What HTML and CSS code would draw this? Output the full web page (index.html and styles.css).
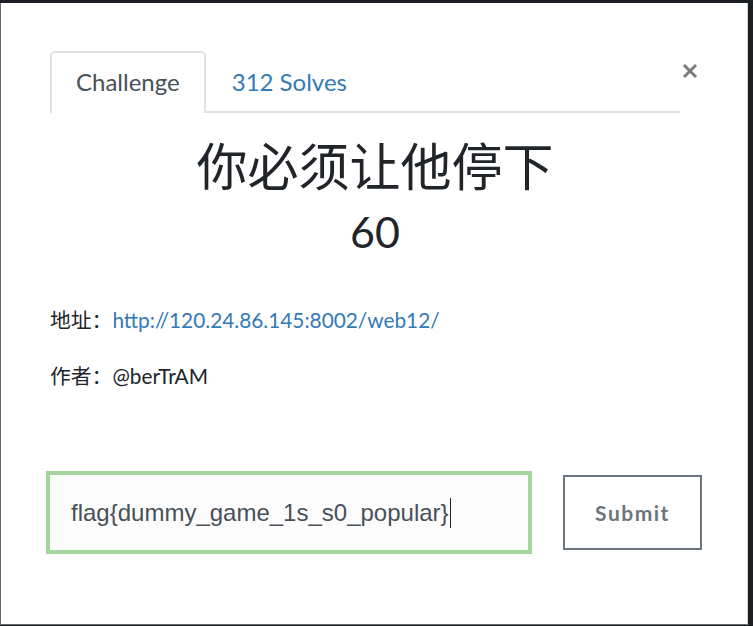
FILE: index.html
```html
<!DOCTYPE html>
<html lang="zh">
<head>
    <meta charset="UTF-8">
    <meta name="viewport" content="width=device-width, initial-scale=1.0">
    <title>你必须让他停下</title>
    <link rel="stylesheet" href="styles.css">
</head>
<body>
    <div class="modal">
        <button class="close" aria-label="Close">
            <svg width="16" height="16" viewBox="0 0 16 16">
                <path d="M2 2 L14 14 M14 2 L2 14" stroke="#7b7b7b" stroke-width="3" stroke-linecap="butt"/>
            </svg>
        </button>

        <ul class="tabs">
            <li class="tab active">Challenge</li>
            <li class="tab"><a href="#">312 Solves</a></li>
        </ul>

        <h2 class="challenge-name">你必须让他停下</h2>
        <h3 class="challenge-value">60</h3>

        <div class="challenge-desc">
            <p>地址：<a href="#">http://120.24.86.145:8002/web12/</a></p>
            <p>作者：@berTrAM</p>
        </div>

        <div class="submit-row">
            <div class="flag-box">
                <span class="flag-text">flag{dummy_game_1s_s0_popular}</span><span class="caret"></span>
            </div>
            <button class="submit-btn">Submit</button>
        </div>
    </div>
</body>
</html>
```

FILE: styles.css
```css
body {
    margin: 0;
    background-color: #1b1e22;
    font-family: Lato, "Noto Sans CJK SC", sans-serif;
    color: #212529;
    overflow: hidden;
}
.modal {
    position: relative;
    box-sizing: border-box;
    width: 748px;
    height: 622px;
    margin: 3px 0 0 0;
    background-color: #fff;
    border-left: 1px solid #666;
    border-right: 1px solid #cfcfcf;
    border-bottom: 1px solid #666;
    padding: 48px 47px 0 49px;
}
.close {
    position: absolute;
    top: 60px;
    left: 681px;
    border: none;
    background: none;
    padding: 0;
}
.close svg {
    display: block;
}
.tabs {
    list-style: none;
    margin: 0;
    padding: 0;
    display: flex;
    border-bottom: 2px solid #dee2e6;
    width: 630px;
}
.tab {
    font-size: 24px;
    line-height: 58px;
    height: 58px;
    padding: 0 24px;
    margin-bottom: -2px;
    border: 2px solid transparent;
    border-bottom: none;
    border-radius: 5px 5px 0 0;
}
.tab.active {
    color: #495057;
    border-color: #dee2e6;
    background-color: #fff;
    height: 60px;
}
.tab a {
    color: #337ab7;
    text-decoration: none;
}
.challenge-name {
    text-align: center;
    font-weight: normal;
    font-size: 51px;
    line-height: 60px;
    margin: 24px 0 0 0;
}
.challenge-value {
    text-align: center;
    font-weight: normal;
    font-size: 43px;
    line-height: 50px;
    margin: 10px 0 0 0;
}
.challenge-desc {
    margin-top: 50px;
    font-size: 20.8px;
    color: #212529;
}
.challenge-desc p {
    margin: 0 0 31px 0;
    line-height: 25px;
}
.challenge-desc a {
    color: #337ab7;
    text-decoration: none;
}
.submit-row {
    display: flex;
    align-items: center;
    gap: 31px;
    margin-top: 83px;
    margin-left: -4px;
}
.flag-box {
    flex: none;
    box-sizing: border-box;
    width: 486px;
    height: 83px;
    border: 4px solid #a6d49e;
    background-color: #fcfcfc;
    display: flex;
    align-items: center;
    padding-left: 21px;
    font-family: "Liberation Sans", Arial, sans-serif;
    font-size: 24px;
    color: #495057;
}
.caret {
    display: inline-block;
    width: 1px;
    height: 30px;
    background-color: #222;
    margin-left: 1px;
}
.submit-btn {
    flex: none;
    box-sizing: border-box;
    width: 139px;
    height: 75px;
    border: 2px solid #6c757d;
    background-color: #fff;
    color: #6c757d;
    font-family: Lato, sans-serif;
    font-weight: bold;
    font-size: 21px;
    letter-spacing: 1.5px;
}
```
